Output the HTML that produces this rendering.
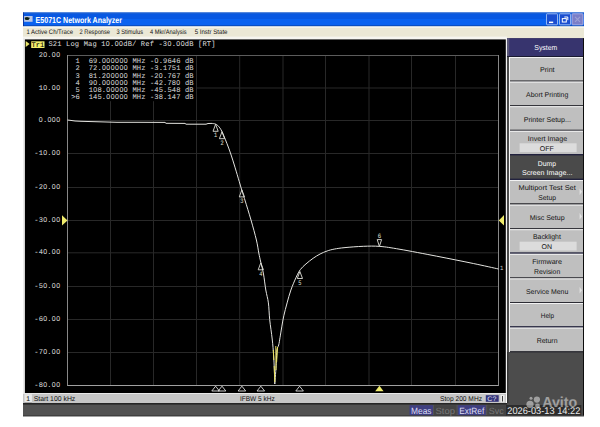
<!DOCTYPE html><html><head><meta charset="utf-8"><style>html,body{margin:0;padding:0;width:600px;height:427px;overflow:hidden;background:#fff}svg{display:block;text-rendering:geometricPrecision}</style></head><body><svg width="600" height="427" viewBox="0 0 600 427"><rect x="0" y="0" width="600" height="427" fill="#ffffff" />
<rect x="23" y="12.5" width="561" height="14" fill="#0858e2" />
<rect x="23" y="12.5" width="561" height="1" fill="#2866cc" />
<rect x="23" y="19" width="561" height="6.5" fill="#0a62f0" />
<rect x="23" y="25.5" width="561" height="1" fill="#0b409e" />
<rect x="23" y="12.5" width="0.8" height="14" fill="#0a2c90" />
<rect x="24.1" y="16" width="8.5" height="5.8" fill="#b8c4e4" />
<path d="M24.6 17.3 Q26.5 21.2 29.8 18.2 L29.6 17.4 Q27 19 24.6 17.3 Z" fill="#0c2014"/>
<ellipse cx="27" cy="18.6" rx="2.3" ry="1.5" fill="#0c2014"/>
<text x="35.6" y="22.8" font-family='"Liberation Sans", sans-serif' font-size="8.6" font-weight="bold" fill="#ffffff" text-anchor="start" textLength="86.4" lengthAdjust="spacingAndGlyphs" >E5071C Network Analyzer</text>
<rect x="546.5" y="13.8" width="11" height="11" rx="0.6" fill="#1a4ed0" stroke="#a0c0f4" stroke-width="0.9"/>
<rect x="559.5" y="13.8" width="11" height="11" rx="0.6" fill="#1a4ed0" stroke="#a0c0f4" stroke-width="0.9"/>
<rect x="572.0" y="13.8" width="11" height="11" rx="0.6" fill="#7a7ec8" stroke="#b0b4e4" stroke-width="0.9"/>
<rect x="549" y="21.6" width="4.2" height="1.5" fill="#ffffff" />
<rect x="562.3" y="18.6" width="4" height="3.4" fill="none" stroke="#ffffff" stroke-width="1"/>
<path d="M564.3 17 H567.8 V20.2" fill="none" stroke="#ffffff" stroke-width="1"/>
<path d="M575 16.8 L580 21.8 M580 16.8 L575 21.8" stroke="#9ca0d4" stroke-width="1.2"/>
<rect x="23" y="26.5" width="561" height="11.7" fill="#ebe8d6" />
<rect x="23" y="26.5" width="561" height="1.2" fill="#fafaf4" />
<rect x="23" y="36.6" width="484" height="2.8" fill="#f6f5f0" />
<text x="26.5" y="34" font-family='"Liberation Sans", sans-serif' font-size="6.6" font-weight="normal" fill="#101010" text-anchor="start" textLength="46.5" lengthAdjust="spacingAndGlyphs" >1 Active Ch/Trace</text>
<text x="79.6" y="34" font-family='"Liberation Sans", sans-serif' font-size="6.6" font-weight="normal" fill="#101010" text-anchor="start" textLength="30.4" lengthAdjust="spacingAndGlyphs" >2 Response</text>
<text x="116.5" y="34" font-family='"Liberation Sans", sans-serif' font-size="6.6" font-weight="normal" fill="#101010" text-anchor="start" textLength="26.5" lengthAdjust="spacingAndGlyphs" >3 Stimulus</text>
<text x="150" y="34" font-family='"Liberation Sans", sans-serif' font-size="6.6" font-weight="normal" fill="#101010" text-anchor="start" textLength="36.7" lengthAdjust="spacingAndGlyphs" >4 Mkr/Analysis</text>
<text x="194.7" y="34" font-family='"Liberation Sans", sans-serif' font-size="6.6" font-weight="normal" fill="#101010" text-anchor="start" textLength="32.8" lengthAdjust="spacingAndGlyphs" >5 Instr State</text>
<rect x="23" y="38.2" width="1.9" height="355" fill="#ececec" />
<rect x="24.9" y="39.4" width="481.1" height="353.6" fill="#000000" />
<rect x="505.8" y="38.2" width="1.2" height="355" fill="#f2f2f2" />
<path d="M25.7 41 L29.6 44 L25.7 47 Z" fill="#e8e46a"/>
<rect x="31.2" y="41.3" width="13.3" height="6.7" fill="#f2ee6c" />
<text x="33.55 37.85 42.15" y="47.1" font-family='"Liberation Mono", monospace' font-size="7" fill="#000000" stroke="#000000" stroke-width="0.06" text-anchor="middle">Tr1</text>
<text x="50.6 55.0 59.4 68.2 72.6 77.0 85.8 90.2 94.6 103.4 112.2 125.4 129.8 134.2 143.0 147.4 151.8 160.6 165.0 173.8 187.0 191.4 200.2 204.6 209.0 213.4" y="46.1" font-family='"Liberation Mono", monospace' font-size="7.1" fill="#d8d8d8" stroke="#d8d8d8" stroke-width="0.06" text-anchor="middle">S21LogMag1.dB/Ref-3.dB[RT]</text>
<text x="107.8 116.6 121.0 169.4 178.2 182.6" y="46.1" font-family='"Liberation Sans", sans-serif' font-size="6.96" fill="#d8d8d8" stroke="#d8d8d8" stroke-width="0.06" text-anchor="middle">000000</text>
<path d="M110.5 55.5 V385.5 M67.5 88.0 H498.5 M153.5 55.5 V385.5 M67.5 120.5 H498.5 M196.5 55.5 V385.5 M67.5 153.5 H498.5 M239.7 55.5 V385.5 M67.5 187.5 H498.5 M283.0 55.5 V385.5 M67.5 220.5 H498.5 M325.5 55.5 V385.5 M67.5 252.8 H498.5 M369.0 55.5 V385.5 M67.5 286.5 H498.5 M411.5 55.5 V385.5 M67.5 319.5 H498.5 M455.5 55.5 V385.5 M67.5 352.5 H498.5" stroke="#282828" stroke-width="1" fill="none"/>
<path d="M67.5 55.5 H498.5" stroke="#5c5c5c" stroke-width="1.2"/>
<path d="M67.5 55.0 V386.0 M498.5 55.0 V386.0" stroke="#888888" stroke-width="1"/>
<path d="M67.5 385.5 H498.5" stroke="#a0a0a0" stroke-width="1"/>
<text x="40.81 49.48" y="57.1" font-family='"Liberation Mono", monospace' font-size="7.1" fill="#d4d4d4" stroke="#d4d4d4" stroke-width="0.06" text-anchor="middle">2.</text>
<text x="45.14 53.8 58.13" y="57.1" font-family='"Liberation Sans", sans-serif' font-size="6.96" fill="#d4d4d4" stroke="#d4d4d4" stroke-width="0.06" text-anchor="middle">000</text>
<text x="40.81 49.48" y="89.6" font-family='"Liberation Mono", monospace' font-size="7.1" fill="#d4d4d4" stroke="#d4d4d4" stroke-width="0.06" text-anchor="middle">1.</text>
<text x="45.14 53.8 58.13" y="89.6" font-family='"Liberation Sans", sans-serif' font-size="6.96" fill="#d4d4d4" stroke="#d4d4d4" stroke-width="0.06" text-anchor="middle">000</text>
<text x="45.14" y="122.1" font-family='"Liberation Mono", monospace' font-size="7.1" fill="#d4d4d4" stroke="#d4d4d4" stroke-width="0.06" text-anchor="middle">.</text>
<text x="40.81 49.48 53.8 58.13" y="122.1" font-family='"Liberation Sans", sans-serif' font-size="6.96" fill="#d4d4d4" stroke="#d4d4d4" stroke-width="0.06" text-anchor="middle">0000</text>
<text x="36.48 40.81 49.47" y="155.1" font-family='"Liberation Mono", monospace' font-size="7.1" fill="#d4d4d4" stroke="#d4d4d4" stroke-width="0.06" text-anchor="middle">-1.</text>
<text x="45.14 53.8 58.13" y="155.1" font-family='"Liberation Sans", sans-serif' font-size="6.96" fill="#d4d4d4" stroke="#d4d4d4" stroke-width="0.06" text-anchor="middle">000</text>
<text x="36.48 40.81 49.47" y="189.1" font-family='"Liberation Mono", monospace' font-size="7.1" fill="#d4d4d4" stroke="#d4d4d4" stroke-width="0.06" text-anchor="middle">-2.</text>
<text x="45.14 53.8 58.13" y="189.1" font-family='"Liberation Sans", sans-serif' font-size="6.96" fill="#d4d4d4" stroke="#d4d4d4" stroke-width="0.06" text-anchor="middle">000</text>
<text x="36.48 40.81 49.47" y="222.1" font-family='"Liberation Mono", monospace' font-size="7.1" fill="#d4d4d4" stroke="#d4d4d4" stroke-width="0.06" text-anchor="middle">-3.</text>
<text x="45.14 53.8 58.13" y="222.1" font-family='"Liberation Sans", sans-serif' font-size="6.96" fill="#d4d4d4" stroke="#d4d4d4" stroke-width="0.06" text-anchor="middle">000</text>
<text x="36.48 40.81 49.47" y="254.4" font-family='"Liberation Mono", monospace' font-size="7.1" fill="#d4d4d4" stroke="#d4d4d4" stroke-width="0.06" text-anchor="middle">-4.</text>
<text x="45.14 53.8 58.13" y="254.4" font-family='"Liberation Sans", sans-serif' font-size="6.96" fill="#d4d4d4" stroke="#d4d4d4" stroke-width="0.06" text-anchor="middle">000</text>
<text x="36.48 40.81 49.47" y="288.1" font-family='"Liberation Mono", monospace' font-size="7.1" fill="#d4d4d4" stroke="#d4d4d4" stroke-width="0.06" text-anchor="middle">-5.</text>
<text x="45.14 53.8 58.13" y="288.1" font-family='"Liberation Sans", sans-serif' font-size="6.96" fill="#d4d4d4" stroke="#d4d4d4" stroke-width="0.06" text-anchor="middle">000</text>
<text x="36.48 40.81 49.47" y="321.1" font-family='"Liberation Mono", monospace' font-size="7.1" fill="#d4d4d4" stroke="#d4d4d4" stroke-width="0.06" text-anchor="middle">-6.</text>
<text x="45.14 53.8 58.13" y="321.1" font-family='"Liberation Sans", sans-serif' font-size="6.96" fill="#d4d4d4" stroke="#d4d4d4" stroke-width="0.06" text-anchor="middle">000</text>
<text x="36.48 40.81 49.47" y="354.1" font-family='"Liberation Mono", monospace' font-size="7.1" fill="#d4d4d4" stroke="#d4d4d4" stroke-width="0.06" text-anchor="middle">-7.</text>
<text x="45.14 53.8 58.13" y="354.1" font-family='"Liberation Sans", sans-serif' font-size="6.96" fill="#d4d4d4" stroke="#d4d4d4" stroke-width="0.06" text-anchor="middle">000</text>
<text x="36.48 40.81 49.47" y="387.1" font-family='"Liberation Mono", monospace' font-size="7.1" fill="#d4d4d4" stroke="#d4d4d4" stroke-width="0.06" text-anchor="middle">-8.</text>
<text x="45.14 53.8 58.13" y="387.1" font-family='"Liberation Sans", sans-serif' font-size="6.96" fill="#d4d4d4" stroke="#d4d4d4" stroke-width="0.06" text-anchor="middle">000</text>
<rect x="68" y="56.2" width="128" height="45" fill="#000000" />
<text x="77.66 90.79 95.16 99.54 134.54 138.91 143.29 152.04 160.79 165.16 169.54 173.91 178.29 187.04 191.41" y="63.0" font-family='"Liberation Mono", monospace' font-size="7.1" fill="#d2d2d2" stroke="#d2d2d2" stroke-width="0.06" text-anchor="middle">169.MHz-.9646dB</text>
<text x="103.91 108.29 112.66 117.04 121.41 125.79 156.41" y="63.0" font-family='"Liberation Sans", sans-serif' font-size="6.96" fill="#d2d2d2" stroke="#d2d2d2" stroke-width="0.06" text-anchor="middle">0000000</text>
<text x="77.66 90.79 95.16 99.54 134.54 138.91 143.29 152.04 156.41 160.79 165.16 169.54 173.91 178.29 187.04 191.41" y="70.28" font-family='"Liberation Mono", monospace' font-size="7.1" fill="#d2d2d2" stroke="#d2d2d2" stroke-width="0.06" text-anchor="middle">272.MHz-3.1751dB</text>
<text x="103.91 108.29 112.66 117.04 121.41 125.79" y="70.28" font-family='"Liberation Sans", sans-serif' font-size="6.96" fill="#d2d2d2" stroke="#d2d2d2" stroke-width="0.06" text-anchor="middle">000000</text>
<text x="77.66 90.79 95.16 99.54 103.91 134.54 138.91 143.29 152.04 156.41 165.16 169.54 173.91 178.29 187.04 191.41" y="77.56" font-family='"Liberation Mono", monospace' font-size="7.1" fill="#d2d2d2" stroke="#d2d2d2" stroke-width="0.06" text-anchor="middle">381.2MHz-2.767dB</text>
<text x="108.29 112.66 117.04 121.41 125.79 160.79" y="77.56" font-family='"Liberation Sans", sans-serif' font-size="6.96" fill="#d2d2d2" stroke="#d2d2d2" stroke-width="0.06" text-anchor="middle">000000</text>
<text x="77.66 90.79 99.54 134.54 138.91 143.29 152.04 156.41 160.79 165.16 169.54 173.91 187.04 191.41" y="84.84" font-family='"Liberation Mono", monospace' font-size="7.1" fill="#d2d2d2" stroke="#d2d2d2" stroke-width="0.06" text-anchor="middle">49.MHz-42.78dB</text>
<text x="95.16 103.91 108.29 112.66 117.04 121.41 125.79 178.29" y="84.84" font-family='"Liberation Sans", sans-serif' font-size="6.96" fill="#d2d2d2" stroke="#d2d2d2" stroke-width="0.06" text-anchor="middle">00000000</text>
<text x="77.66 90.79 99.54 103.91 134.54 138.91 143.29 152.04 156.41 160.79 165.16 169.54 173.91 178.29 187.04 191.41" y="92.12" font-family='"Liberation Mono", monospace' font-size="7.1" fill="#d2d2d2" stroke="#d2d2d2" stroke-width="0.06" text-anchor="middle">518.MHz-45.548dB</text>
<text x="95.16 108.29 112.66 117.04 121.41 125.79" y="92.12" font-family='"Liberation Sans", sans-serif' font-size="6.96" fill="#d2d2d2" stroke="#d2d2d2" stroke-width="0.06" text-anchor="middle">000000</text>
<text x="73.29 77.66 90.79 95.16 99.54 103.91 134.54 138.91 143.29 152.04 156.41 160.79 165.16 169.54 173.91 178.29 187.04 191.41" y="99.4" font-family='"Liberation Mono", monospace' font-size="7.1" fill="#d2d2d2" stroke="#d2d2d2" stroke-width="0.06" text-anchor="middle">&gt;6145.MHz-38.147dB</text>
<text x="108.29 112.66 117.04 121.41 125.79" y="99.4" font-family='"Liberation Sans", sans-serif' font-size="6.96" fill="#d2d2d2" stroke="#d2d2d2" stroke-width="0.06" text-anchor="middle">00000</text>
<path d="M67.5 120 L70 120.3 L75 121 L81 121.3 L117 122.3 L140 122.3 L165 122.4 L166 123.3 L185 123.4 L186 124.2 L206 124.2 L208 123.5 L212 123.4 C212.60 123.52 214.52 123.62 215.6 124.1 C216.68 124.58 217.43 125.03 218.5 126.3 C219.57 127.57 220.30 128.07 222 131.7 C223.70 135.33 226.65 142.55 228.7 148.1 C230.75 153.65 232.10 157.93 234.3 165 C236.50 172.07 240.13 184.67 241.9 190.5 C243.67 196.33 243.38 195.08 244.9 200 C246.42 204.92 249.08 213.33 251 220 C252.92 226.67 255.10 234.50 256.4 240 C257.70 245.50 258.07 249.28 258.8 253 C259.53 256.72 260.02 258.80 260.8 262.3 C261.58 265.80 262.67 269.38 263.5 274 C264.33 278.62 264.98 285.18 265.8 290 C266.62 294.82 267.75 297.97 268.4 302.9 C269.05 307.83 269.07 313.58 269.7 319.6 C270.33 325.62 271.55 333.10 272.2 339 C272.85 344.90 273.25 350.00 273.6 355 C273.95 360.00 274.10 364.17 274.3 369 C274.50 373.83 274.72 381.50 274.8 384 C275.05 380.55 275.95 368.97 276.3 363.3 C276.65 357.63 276.50 353.05 276.9 350 C277.30 346.95 278.18 347.05 278.7 345 C279.22 342.95 279.47 340.85 280 337.7 C280.53 334.55 281.27 329.75 281.9 326.1 C282.53 322.45 282.93 319.67 283.8 315.8 C284.67 311.93 285.92 307.20 287.1 302.9 C288.28 298.60 289.38 294.28 290.9 290 C292.42 285.72 294.62 280.62 296.2 277.2 C297.78 273.78 298.77 271.72 300.4 269.5 C302.03 267.28 303.88 265.77 306 263.9 C308.12 262.03 310.75 259.95 313.1 258.3 C315.45 256.65 317.77 255.22 320.1 254 C322.43 252.78 324.75 251.82 327.1 251 C329.45 250.18 331.22 249.67 334.2 249.1 C337.18 248.53 340.15 248.07 345 247.6 C349.85 247.13 357.50 246.50 363.3 246.3 C369.10 246.10 373.68 245.90 379.8 246.4 C385.92 246.90 390.52 247.67 400 249.3 C409.48 250.93 424.48 253.83 436.7 256.2 C448.92 258.57 463.00 261.37 473.3 263.5 C483.60 265.63 494.30 268.08 498.5 269" stroke="#e4e4e0" stroke-width="1" fill="none" stroke-linejoin="round"/>
<path d="M273.3 350 L273.8 360 M274.2 366 L274.8 382 M275.8 346 L276 370 M277.6 347 L276.6 362" stroke="#e8e060" stroke-width="1" fill="none"/>
<path d="M215.6 124.3 L218.2 131.3 L213.0 131.3 Z" fill="none" stroke="#e0e0d8" stroke-width="0.9"/>
<text x="215.6" y="137.3" font-family='"Liberation Mono", monospace' font-size="6.8" font-weight="normal" fill="#e0e0d8" text-anchor="middle" textLength="3.2" lengthAdjust="spacingAndGlyphs" >1</text>
<path d="M222 131.7 L224.6 138.7 L219.4 138.7 Z" fill="none" stroke="#e0e0d8" stroke-width="0.9"/>
<text x="222" y="144.7" font-family='"Liberation Mono", monospace' font-size="6.8" font-weight="normal" fill="#e0e0d8" text-anchor="middle" textLength="3.2" lengthAdjust="spacingAndGlyphs" >2</text>
<path d="M241.9 189.9 L244.5 196.9 L239.3 196.9 Z" fill="none" stroke="#e0e0d8" stroke-width="0.9"/>
<text x="241.9" y="202.9" font-family='"Liberation Mono", monospace' font-size="6.8" font-weight="normal" fill="#e0e0d8" text-anchor="middle" textLength="3.2" lengthAdjust="spacingAndGlyphs" >3</text>
<path d="M260.8 262.8 L263.40000000000003 269.8 L258.2 269.8 Z" fill="none" stroke="#e0e0d8" stroke-width="0.9"/>
<text x="260.8" y="275.8" font-family='"Liberation Mono", monospace' font-size="6.8" font-weight="normal" fill="#e0e0d8" text-anchor="middle" textLength="3.2" lengthAdjust="spacingAndGlyphs" >4</text>
<path d="M299.9 271.5 L302.5 278.5 L297.29999999999995 278.5 Z" fill="none" stroke="#e0e0d8" stroke-width="0.9"/>
<text x="299.9" y="284.5" font-family='"Liberation Mono", monospace' font-size="6.8" font-weight="normal" fill="#e0e0d8" text-anchor="middle" textLength="3.2" lengthAdjust="spacingAndGlyphs" >5</text>
<path d="M379.4 246.4 L381.6 239.6 L377.2 239.6 Z" fill="none" stroke="#e0e0d8" stroke-width="0.9"/>
<text x="379.4" y="237.8" font-family='"Liberation Mono", monospace' font-size="6.6" font-weight="normal" fill="#e0e0d8" text-anchor="middle" textLength="3.4" lengthAdjust="spacingAndGlyphs" >6</text>
<text x="501.6" y="270" font-family='"Liberation Mono", monospace' font-size="6.6" font-weight="normal" fill="#d0d0d0" text-anchor="middle" textLength="3.4" lengthAdjust="spacingAndGlyphs" >1</text>
<path d="M62 215.2 L67.5 220.5 L62 225.5 Z" fill="#f0ec6c"/>
<path d="M504 215 L498.8 220.5 L504 225.5 Z" fill="#f0ec6c"/>
<path d="M215.6 386.2 L219.4 391 L211.79999999999998 391 Z" fill="none" stroke="#dcdcdc" stroke-width="0.9"/>
<path d="M222 386.2 L225.8 391 L218.2 391 Z" fill="none" stroke="#dcdcdc" stroke-width="0.9"/>
<path d="M241.9 386.2 L245.70000000000002 391 L238.1 391 Z" fill="none" stroke="#dcdcdc" stroke-width="0.9"/>
<path d="M260.8 386.2 L264.6 391 L257.0 391 Z" fill="none" stroke="#dcdcdc" stroke-width="0.9"/>
<path d="M299.6 386.2 L303.40000000000003 391 L295.8 391 Z" fill="none" stroke="#dcdcdc" stroke-width="0.9"/>
<path d="M379.4 385.8 L383.6 391.2 L375.2 391.2 Z" fill="#f0ec6c"/>
<rect x="23" y="393" width="483" height="10.3" fill="#c6c6c6" />
<rect x="23" y="393" width="483" height="0.9" fill="#ececec" />
<rect x="24.5" y="394.2" width="7.4" height="8.2" fill="#e8e8e8" />
<rect x="24.5" y="402" width="7.4" height="0.6" fill="#909090" />
<text x="28.2" y="401.4" font-family='"Liberation Sans", sans-serif' font-size="6.8" font-weight="normal" fill="#101010" text-anchor="middle" >1</text>
<text x="33.7" y="401.4" font-family='"Liberation Sans", sans-serif' font-size="7" font-weight="normal" fill="#101010" text-anchor="start" textLength="41.6" lengthAdjust="spacingAndGlyphs" >Start 100 kHz</text>
<text x="240" y="401.4" font-family='"Liberation Sans", sans-serif' font-size="7" font-weight="normal" fill="#101010" text-anchor="start" textLength="34.7" lengthAdjust="spacingAndGlyphs" >IFBW 5 kHz</text>
<text x="440" y="401.4" font-family='"Liberation Sans", sans-serif' font-size="7" font-weight="normal" fill="#101010" text-anchor="start" textLength="42" lengthAdjust="spacingAndGlyphs" >Stop 200 MHz</text>
<rect x="485.8" y="395.2" width="12.9" height="6.6" fill="#33337a" />
<text x="487.3" y="401.2" font-family='"Liberation Sans", sans-serif' font-size="6.6" font-weight="normal" fill="#e0e0f0" text-anchor="start" textLength="9" lengthAdjust="spacingAndGlyphs" >C?</text>
<rect x="500.5" y="394.8" width="4" height="7.4" fill="#ececec" />
<rect x="502" y="396" width="0.9" height="5.5" fill="#303030" />
<rect x="507" y="38.2" width="77" height="377.3" fill="#4c4c4c" />
<rect x="583" y="38.2" width="1" height="377.3" fill="#0c0c0c" />
<rect x="509" y="57" width="1" height="295" fill="#f4f4f4" />
<rect x="507" y="352" width="1.5" height="51" fill="#343434" />
<rect x="507" y="38.2" width="76" height="17.8" fill="#37346e" />
<rect x="507" y="38.2" width="2.2" height="17.8" fill="#5a5878" />
<rect x="507" y="56" width="76" height="1" fill="#1a1a30" />
<text x="545.8" y="50.2" font-family='"Liberation Sans", sans-serif' font-size="7.2" font-weight="normal" fill="#ffffff" text-anchor="middle" textLength="23" lengthAdjust="spacingAndGlyphs" >System</text>
<rect x="510" y="57.0" width="73" height="23.6" fill="#bfbfbf" />
<rect x="510" y="57.0" width="73" height="1" fill="#f2f2f2" />
<rect x="510" y="80.6" width="73" height="1.3" fill="#2c2c34" />
<text x="540" y="72.3" font-family='"Liberation Sans", sans-serif' font-size="7" font-weight="normal" fill="#141414" text-anchor="start" textLength="14.6" lengthAdjust="spacingAndGlyphs" >Print</text>
<rect x="510" y="81.6" width="73" height="23.6" fill="#bfbfbf" />
<rect x="510" y="81.6" width="73" height="1" fill="#f2f2f2" />
<rect x="510" y="105.19999999999999" width="73" height="1.3" fill="#2c2c34" />
<text x="526" y="96.89999999999999" font-family='"Liberation Sans", sans-serif' font-size="7" font-weight="normal" fill="#141414" text-anchor="start" textLength="42.3" lengthAdjust="spacingAndGlyphs" >Abort Printing</text>
<rect x="510" y="106.2" width="73" height="23.6" fill="#bfbfbf" />
<rect x="510" y="106.2" width="73" height="1" fill="#f2f2f2" />
<rect x="510" y="129.8" width="73" height="1.3" fill="#2c2c34" />
<text x="523.7" y="121.5" font-family='"Liberation Sans", sans-serif' font-size="7" font-weight="normal" fill="#141414" text-anchor="start" textLength="47.2" lengthAdjust="spacingAndGlyphs" >Printer Setup...</text>
<rect x="510" y="130.8" width="73" height="23.6" fill="#bfbfbf" />
<rect x="510" y="130.8" width="73" height="1" fill="#f2f2f2" />
<rect x="510" y="154.0" width="73" height="2.2" fill="#22223e" />
<text x="527.8" y="141.0" font-family='"Liberation Sans", sans-serif' font-size="7" font-weight="normal" fill="#141414" text-anchor="start" textLength="39.4" lengthAdjust="spacingAndGlyphs" >Invert Image</text>
<rect x="519.6" y="143.3" width="57" height="8.8" fill="#dcdcdc" />
<text x="546.8" y="150.70000000000002" font-family='"Liberation Sans", sans-serif' font-size="7" font-weight="normal" fill="#141414" text-anchor="middle" >OFF</text>
<rect x="510" y="155.4" width="73" height="23.6" fill="#4a4a4a" />
<rect x="510" y="178.6" width="73" height="2.2" fill="#22223e" />
<text x="537.8" y="165.8" font-family='"Liberation Sans", sans-serif' font-size="7" font-weight="normal" fill="#ffffff" text-anchor="start" textLength="18.2" lengthAdjust="spacingAndGlyphs" >Dump</text>
<text x="521.9" y="175.3" font-family='"Liberation Sans", sans-serif' font-size="7" font-weight="normal" fill="#ffffff" text-anchor="start" textLength="50.5" lengthAdjust="spacingAndGlyphs" >Screen Image...</text>
<rect x="510" y="180.0" width="73" height="23.6" fill="#bfbfbf" />
<rect x="510" y="180.0" width="73" height="1" fill="#f2f2f2" />
<rect x="510" y="203.29999999999998" width="73" height="1.9" fill="#2a2a30" />
<text x="518.5" y="190.4" font-family='"Liberation Sans", sans-serif' font-size="7" font-weight="normal" fill="#141414" text-anchor="start" textLength="57.3" lengthAdjust="spacingAndGlyphs" >Multiport Test Set</text>
<text x="538.3" y="199.9" font-family='"Liberation Sans", sans-serif' font-size="7" font-weight="normal" fill="#141414" text-anchor="start" textLength="17.7" lengthAdjust="spacingAndGlyphs" >Setup</text>
<path d="M579.6 188.5 L582 191.8 L579.6 195.0 Z" fill="#e4e4e4"/>
<rect x="510" y="204.60000000000002" width="73" height="23.6" fill="#bfbfbf" />
<rect x="510" y="204.60000000000002" width="73" height="1" fill="#f2f2f2" />
<rect x="510" y="228.20000000000002" width="73" height="1.3" fill="#2c2c34" />
<text x="529.7" y="219.90000000000003" font-family='"Liberation Sans", sans-serif' font-size="7" font-weight="normal" fill="#141414" text-anchor="start" textLength="34.9" lengthAdjust="spacingAndGlyphs" >Misc Setup</text>
<path d="M579.6 213.10000000000002 L582 216.40000000000003 L579.6 219.60000000000002 Z" fill="#e4e4e4"/>
<rect x="510" y="229.20000000000002" width="73" height="23.6" fill="#bfbfbf" />
<rect x="510" y="229.20000000000002" width="73" height="1" fill="#f2f2f2" />
<rect x="510" y="252.4" width="73" height="2.2" fill="#22223e" />
<text x="533" y="239.4" font-family='"Liberation Sans", sans-serif' font-size="7" font-weight="normal" fill="#141414" text-anchor="start" textLength="27.8" lengthAdjust="spacingAndGlyphs" >Backlight</text>
<rect x="519.6" y="241.70000000000002" width="57" height="8.8" fill="#dcdcdc" />
<text x="546.8" y="249.10000000000002" font-family='"Liberation Sans", sans-serif' font-size="7" font-weight="normal" fill="#141414" text-anchor="middle" >ON</text>
<rect x="510" y="253.8" width="73" height="23.6" fill="#bfbfbf" />
<rect x="510" y="253.8" width="73" height="1" fill="#f2f2f2" />
<rect x="510" y="277.40000000000003" width="73" height="1.3" fill="#2c2c34" />
<text x="532.2" y="264.2" font-family='"Liberation Sans", sans-serif' font-size="7" font-weight="normal" fill="#141414" text-anchor="start" textLength="29.8" lengthAdjust="spacingAndGlyphs" >Firmware</text>
<text x="534" y="273.7" font-family='"Liberation Sans", sans-serif' font-size="7" font-weight="normal" fill="#141414" text-anchor="start" textLength="26.2" lengthAdjust="spacingAndGlyphs" >Revision</text>
<rect x="510" y="278.4" width="73" height="23.6" fill="#bfbfbf" />
<rect x="510" y="278.4" width="73" height="1" fill="#f2f2f2" />
<rect x="510" y="302.0" width="73" height="1.3" fill="#2c2c34" />
<text x="526" y="293.7" font-family='"Liberation Sans", sans-serif' font-size="7" font-weight="normal" fill="#141414" text-anchor="start" textLength="42.3" lengthAdjust="spacingAndGlyphs" >Service Menu</text>
<path d="M579.6 286.9 L582 290.2 L579.6 293.4 Z" fill="#e4e4e4"/>
<rect x="510" y="303.0" width="73" height="23.6" fill="#bfbfbf" />
<rect x="510" y="303.0" width="73" height="1" fill="#f2f2f2" />
<rect x="510" y="326.20000000000005" width="73" height="2.2" fill="#22223e" />
<text x="540.8" y="318.3" font-family='"Liberation Sans", sans-serif' font-size="7" font-weight="normal" fill="#141414" text-anchor="start" textLength="13.2" lengthAdjust="spacingAndGlyphs" >Help</text>
<rect x="510" y="327.6" width="73" height="23.6" fill="#bfbfbf" />
<rect x="510" y="327.6" width="73" height="1" fill="#f2f2f2" />
<rect x="510" y="351.20000000000005" width="73" height="1.3" fill="#2c2c34" />
<text x="536.7" y="342.90000000000003" font-family='"Liberation Sans", sans-serif' font-size="7" font-weight="normal" fill="#141414" text-anchor="start" textLength="20.8" lengthAdjust="spacingAndGlyphs" >Return</text>
<rect x="23" y="403.3" width="484" height="12.4" fill="#525252" />
<rect x="23" y="403" width="484" height="1.6" fill="#262626" />
<rect x="23" y="415.4" width="561" height="1" fill="#141414" />
<rect x="409.5" y="405.2" width="23.5" height="10" fill="#3f3f80" />
<text x="421.25" y="414" font-family='"Liberation Sans", sans-serif' font-size="9" font-weight="normal" fill="#dcdcf4" text-anchor="middle" textLength="20.5" lengthAdjust="spacingAndGlyphs" >Meas</text>
<rect x="434" y="405.2" width="22.5" height="10" fill="#444444" />
<text x="445.25" y="414" font-family='"Liberation Sans", sans-serif' font-size="9" font-weight="normal" fill="#787878" text-anchor="middle" textLength="19.5" lengthAdjust="spacingAndGlyphs" >Stop</text>
<rect x="457.8" y="405.2" width="28" height="10" fill="#3f3f80" />
<text x="471.8" y="414" font-family='"Liberation Sans", sans-serif' font-size="9" font-weight="normal" fill="#dcdcf4" text-anchor="middle" textLength="25" lengthAdjust="spacingAndGlyphs" >ExtRef</text>
<rect x="487.3" y="405.2" width="18" height="10" fill="#444444" />
<text x="496.3" y="414" font-family='"Liberation Sans", sans-serif' font-size="9" font-weight="normal" fill="#787878" text-anchor="middle" textLength="15" lengthAdjust="spacingAndGlyphs" >Svc</text>
<rect x="505.8" y="405" width="75.5" height="10.5" fill="#2c2c2c" />
<text x="507.3" y="413.9" font-family='"Liberation Sans", sans-serif' font-size="9.8" font-weight="normal" fill="#ececec" text-anchor="start" textLength="73" lengthAdjust="spacingAndGlyphs" >2026-03-13 14:22</text>
<g opacity="0.47" fill="#ffffff"><circle cx="530" cy="404.3" r="3.6"/><circle cx="536.9" cy="399.6" r="3.1"/><circle cx="537.5" cy="406" r="2.4"/><circle cx="531" cy="398.3" r="1.5"/><text x="542.2" y="407.2" font-family='"Liberation Sans", sans-serif' font-size="14.4" font-weight="bold" textLength="35" lengthAdjust="spacingAndGlyphs">Avito</text></g></svg></body></html>
